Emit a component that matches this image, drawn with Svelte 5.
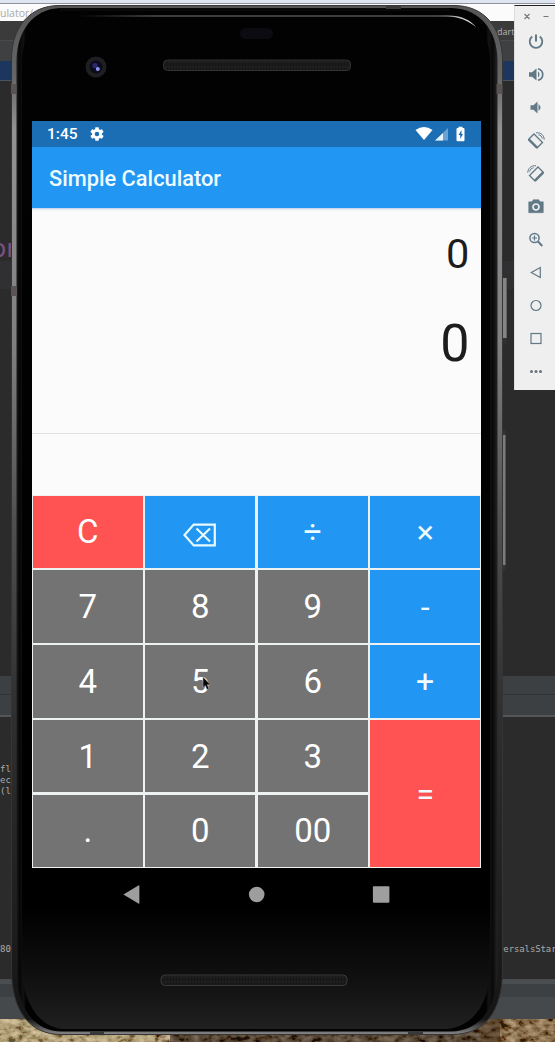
<script>
  const keys = [
    { t: 'C', c: 'red' }, { t: 'back', c: 'blue' }, { t: '÷', c: 'blue op' }, { t: '×', c: 'blue op' },
    { t: '7' }, { t: '8' }, { t: '9' }, { t: '-', c: 'blue op' },
    { t: '4' }, { t: '5' }, { t: '6' }, { t: '+', c: 'blue op' },
    { t: '1' }, { t: '2' }, { t: '3' }, { t: '=', c: 'red op tall' },
    { t: '.' }, { t: '0' }, { t: '00' }
  ];
  const tools = ['power', 'volup', 'voldown', 'rotl', 'rotr', 'camera', 'zoom', 'back', 'home', 'square', 'more'];
</script>

<div class="desktop">
  <div class="ide">
    <div class="topline"></div>
    <div class="address"><span>ulator/c</span></div>
    <div class="tabs"><span>dart</span></div>
    <div class="subtabs"></div>
    <div class="crumb"></div>
    <div class="editor"><span>or</span></div>
    <div class="bar first"></div>
    <div class="bar second"></div>
    <div class="console">
      <pre class="log">fl
ec
(l</pre>
      <div class="last"><span>80</span><span class="right">versalsStar</span></div>
    </div>
    <div class="status"></div>
    <svg class="rocks" width="555" height="23" viewBox="0 0 555 23">
      <filter id="grain" x="0" y="0" width="100%" height="100%">
        <feTurbulence type="fractalNoise" baseFrequency="0.11 0.17" numOctaves="5" seed="8" />
        <feColorMatrix values="1.5 .3 0 0 -.55  1.3 .25 0 0 -.52  .95 .2 0 0 -.43  0 0 0 0 1" />
      </filter>
      <rect width="555" height="23" fill="#66543c" />
      <rect width="555" height="23" filter="url(#grain)" opacity=".85" />
      <rect width="155" height="23" fill="#d8cc98" opacity=".38" />
      <rect x="170" width="330" height="23" fill="#1c0f0c" opacity=".5" />
      <rect x="480" width="75" height="23" fill="#6b4520" opacity=".3" />
    </svg>
  </div>

  <div class="phone">
    <svg class="body" width="508" height="1036" viewBox="0 0 508 1036">
      <defs>
        <linearGradient id="rim" x1="0" y1="0" x2="0" y2="1">
          <stop offset="0" stop-color="#555" /><stop offset=".07" stop-color="#666" /><stop offset=".12" stop-color="#929292" />
          <stop offset=".33" stop-color="#808080" /><stop offset=".5" stop-color="#505050" /><stop offset=".68" stop-color="#303030" /><stop offset=".985" stop-color="#151515" /><stop offset="1" stop-color="#888" />
        </linearGradient>
        <linearGradient id="face" x1="0" y1="0" x2="0" y2="1">
          <stop offset="0" stop-color="#020202" /><stop offset=".88" stop-color="#000" /><stop offset=".95" stop-color="#101010" /><stop offset="1" stop-color="#202020" />
        </linearGradient>
        <linearGradient id="edge" x1="0" y1="0" x2="1" y2="0">
          <stop offset="0" stop-color="#1c1c1c" /><stop offset=".006" stop-color="#060606" /><stop offset=".014" stop-color="#121212" /><stop offset=".02" stop-color="#020202" />
          <stop offset=".976" stop-color="#020202" /><stop offset=".982" stop-color="#141414" /><stop offset=".99" stop-color="#090909" /><stop offset="1" stop-color="#242424" />
        </linearGradient>
        <linearGradient id="shine" x1="0" y1="0" x2="1" y2="0">
          <stop offset="0" stop-color="#777" stop-opacity="0" /><stop offset=".2" stop-color="#777" /><stop offset=".9" stop-color="#777" /><stop offset="1" stop-color="#eee" />
        </linearGradient>
        <pattern id="mesh" width="6" height="5" patternUnits="userSpaceOnUse">
          <rect width="6" height="5" fill="#151515" /><path d="M0 2H6M1 0V5M4 0V5" stroke="#292929" stroke-width=".6" />
        </pattern>
      </defs>
      <rect x="501" y="273" width="6" height="72" rx="2" fill="#303030" /><rect x="503" y="278" width="3.6" height="60" fill="#858585" />
      <rect x="500" y="430" width="5.5" height="141" rx="2" fill="#343434" /><rect x="502.5" y="435" width="3" height="130" fill="#7c7c7c" />
      <path d="M59 5.500H454C484 5.500 502 27 502.500 60V972C502 1010 486 1034.500 452 1034.500H61C29 1034.500 12 1010 11.500 972V58C12 27 30 5.500 59 5.500Z" fill="url(#rim)" stroke="#353535" />
      <path d="M60 8H452C480 9 497 30 497.500 60V972C497 1006 481 1031 451 1031.500H62C33 1031.500 17 1006 16.500 972V60C17 31 33 9 60 8Z" fill="url(#edge)" />
      <path d="M63 13H449C476 15 489 32 490 60V970C489 1002 475 1025 448 1029H62C37 1026 23 1000 22 970V60C23 32 37 15 63 13Z" fill="url(#face)" />
      <path d="M78 15.500H448C462 15.500 470 20 476 27C467 20 459 17 447 16.500H78Z" fill="url(#shine)" />
      <path d="M60 9.500H450" stroke="#090909" stroke-width="3" />
      <path d="M11 84H16.500V94H11ZM11 286H17V296H11ZM496.500 84H502.500V94H496.500Z" fill="#595353" />
      <path d="M386 5.500H401V9H386ZM408 1031.500H423V1034H408ZM90 1031.500H104V1034H90Z" fill="#393939" />
      <rect x="240" y="28" width="33" height="11" rx="5.500" fill="#0c0b12" />
      <rect x="163.500" y="60" width="187" height="10.500" rx="4" fill="url(#mesh)" stroke="#333" />
      <rect x="161" y="975" width="186" height="10.500" rx="4" fill="url(#mesh)" stroke="#383838" />
      <circle cx="96" cy="67" r="10.500" fill="#1f1e21" /><circle cx="96" cy="67" r="6.500" fill="#0d0c1c" />
      <circle cx="95" cy="65.500" r="2.600" fill="#28286b" /><circle cx="97.800" cy="69" r="2" fill="#8e96ee" />
    </svg>

    <div class="screen">
      <div class="statusbar">
        <span>1:45</span>
        <svg class="gear" width="16" height="16" viewBox="0 0 24 24"><path fill="#fff" fill-rule="evenodd" d="M19.4 13a7.800 7.800 0 0 0 0-2l2.200-1.700a.5.5 0 0 0 .1-.7l-2-3.400a.5.5 0 0 0-.6-.2l-2.500 1a7.500 7.500 0 0 0-1.700-1L14.500 2.400A.5.5 0 0 0 14 2h-4a.5.5 0 0 0-.5.4L9.100 5a7.500 7.500 0 0 0-1.700 1l-2.500-1a.5.5 0 0 0-.6.2l-2 3.400a.5.5 0 0 0 .1.7L4.600 11a7.800 7.800 0 0 0 0 2l-2.200 1.700a.5.5 0 0 0-.1.7l2 3.400c.1.200.4.300.6.200l2.500-1a7.500 7.500 0 0 0 1.700 1l.4 2.600c0 .2.200.4.5.4h4c.3 0 .5-.2.500-.4l.4-2.600a7.500 7.500 0 0 0 1.700-1l2.500 1c.2.100.5 0 .6-.2l2-3.400a.5.500 0 0 0-.1-.7L19.400 13ZM12 15.400a3.400 3.400 0 1 1 0-6.800 3.400 3.400 0 0 1 0 6.800Z" /></svg>
        <svg class="signals" width="52" height="18" viewBox="0 0 52 18">
          <path d="M.5 5Q9 -1 17.500 5L9 15Z" fill="#fff" />
          <path d="M33 3V15.500H20Z" fill="#6aa2d3" /><path d="M28 8V15.500H20Z" fill="#e6f4ff" />
          <path d="M43.500 3H42.500Q41.500 3 41.500 4V15Q41.500 16.200 42.500 16.200H48.500Q49.500 16.200 49.500 15V4Q49.500 3 48.500 3H47.500V1.800H43.500Z" fill="#fff" /><path d="M46.500 5L43.500 10H45.200V14L48 9H46.500Z" fill="#1b6cb0" />
        </svg>
      </div>
      <div class="appbar">Simple Calculator</div>
      <div class="readout">
        <div class="expression">0</div>
        <div class="result">0</div>
      </div>
      <div class="gap"></div>
      <div class="keys">
        {#each keys as k}
          <div class="key {k.c ?? ''}">
            {#if k.t === 'back'}
              <svg width="34" height="25" viewBox="0 0 34 25" fill="none" stroke="#e8faff" stroke-width="2.200"><path d="M10.700 1.600H31.800V22.400H10.700L1.500 12Z" /><path d="M13.500 5.500L27 18.500M27 5.500L13.500 18.500" /></svg>
            {:else}{k.t}{/if}
          </div>
        {/each}
      </div>
      <div class="nav">
        <svg width="449" height="52" viewBox="0 0 449 52" fill="#9e9e9e"><path d="M91.400 26.500L106.400 17.500Q107.400 17 107.400 18V35Q107.400 36 106.400 35.500Z" /><circle cx="224.700" cy="26.500" r="7.800" /><rect x="340.900" y="18.300" width="16.500" height="16.500" rx="1" /></svg>
      </div>
    </div>
  </div>

  <svg class="cursor" width="10" height="16" viewBox="0 0 10 16"><path d="M1 1V11.500L3.300 9.500L5 13.500L7 12.600L5.300 8.800H8.500Z" fill="#050505" stroke="#aaa" stroke-width=".6" /></svg>

  <div class="tools">
    <svg class="winbtns" width="41" height="19" viewBox="0 0 41 19" stroke="#777" stroke-width="1.100"><path d="M10.500 8L15.500 13M15.500 8L10.500 13M29.500 10.500H34.500" /></svg>
    {#each tools as n}
      <svg class="tool" width="22" height="33" viewBox="-11 -16.500 22 33" fill="none" stroke="#617885" stroke-width="1.500">
        {#if n === 'power'}
          <path d="M0 -7V0" stroke-width="2" /><path d="M-3.800 -5A6.300 6.300 0 1 0 3.800 -5" stroke-width="1.800" />
        {:else if n === 'volup'}
          <path d="M-7 -2.300H-4L.5 -6V6L-4 2.300H-7Z" fill="#617885" stroke="none" /><path d="M2 -3.200Q5 0 2 3.200Z" fill="#617885" stroke="none" /><path d="M2 -5.800C8.300 -4 8.300 4 2 5.800" stroke-width="1.700" />
        {:else if n === 'voldown'}
          <path d="M-5.500 -2.300H-2.500L1.500 -6V6L-2.500 2.300H-5.500Z" fill="#617885" stroke="none" /><path d="M2.500 -3.500Q6.500 0 2.500 3.500Z" fill="#617885" stroke="none" />
        {:else if n === 'rotl' || n === 'rotr'}
          <g transform={n === 'rotr' ? 'scale(-1 1)' : ''}>
            <path d="M-7.300 -1.200L-2 -6.500L6.500 2L1.200 7.300Z" stroke-width="1.300" /><path d="M-7.300 -1.200L1.200 7.300" stroke-width="2.400" /><path d="M0 -7.700C5 -8.300 8.200 -5 8.200 -.8M2.500 -5.700C4.500 -5.500 6 -4 6.300 -1.900" stroke-width="1" />
          </g>
        {:else if n === 'camera'}
          <path d="M-7.300 -4.700H-4L-2.800 -6.800H2.800L4 -4.700H7.300V6.200H-7.300Z" fill="#617885" stroke="#617885" stroke-width=".5" stroke-linejoin="round" /><circle cx="0" cy=".5" r="3" stroke="#eceff1" stroke-width="1.700" />
        {:else if n === 'zoom'}
          <circle cx="-1.500" cy="-1.500" r="4.600" /><path d="M2 2L6.300 6.500" stroke-width="2" /><path d="M-4 -1.500H1M-1.500 -4V1" stroke-width="1.200" />
        {:else if n === 'back'}
          <path d="M4.300 -5V5L-4.700 0Z" stroke-width="1.200" />
        {:else if n === 'home'}
          <circle cx="0" cy="0" r="5" stroke-width="1.200" />
        {:else if n === 'square'}
          <rect x="-5" y="-5" width="10" height="10" stroke-width="1.200" />
        {:else}
          <g fill="#68737a" stroke="none"><circle cx="-4.500" cy="0" r="1.500" /><circle cx="0" cy="0" r="1.500" /><circle cx="4.500" cy="0" r="1.500" /></g>
        {/if}
      </svg>
    {/each}
  </div>
</div>

<style>
  .desktop { position: relative; width: 555px; height: 1042px; overflow: hidden; background: #2b2b2b; font-family: Roboto, sans-serif; }
  .ide { display: flex; flex-direction: column; height: 1042px; }
  .topline { height: 3px; background: #dfe4f1; border-bottom: 1px solid #8d929c; }
  .address { height: 17px; background: #fbfbfb; color: #aaa; font: 10.500px/18px "Open Sans", sans-serif; }
  .tabs { height: 20px; box-sizing: border-box; background: #3b3b3c; border-bottom: 1px solid #4b4b4b; color: #b5b5b5; font: 9px/21px "Open Sans", sans-serif; padding-left: 497px; }
  .subtabs { height: 20px; background: #3f4041; }
  .crumb { height: 19px; background: #1d365e; border-bottom: 1px solid #4a5361; }
  .editor { height: 595px; color: #79517e; font: 25px/336px "DejaVu Sans", sans-serif; background: linear-gradient(#2b2b2b 180px, #303032 180px, #303032 208px, #2b2b2b 208px); }
  .editor span { margin-left: -9px; }
  .bar { height: 18px; background: #3d4043; border-bottom: 1px solid #303235; }
  .bar.second { height: 20px; border-bottom: 2px solid #555657; }
  .console { height: 262px; box-sizing: border-box; display: flex; flex-direction: column; justify-content: space-between; padding: 47px 0 23px; color: #aaa; font: 9px/11px "DejaVu Sans Mono", monospace; }
  .log { margin: 0; font: inherit; }
  .last { display: flex; justify-content: space-between; line-height: 14px; }
  .right { width: 57px; white-space: nowrap; letter-spacing: -.1px; }
  .status { height: 40px; background: linear-gradient(#4b4e50 0 5px, #3d4042 5px 18px, #45494c 18px); }
  .rocks { display: block; }
  .phone { position: absolute; left: 0; top: 0; width: 508px; height: 1036px; }
  .body { position: absolute; left: 0; top: 0; }
  .screen { position: relative; margin: 121px 0 0 31.600px; width: 449.800px; }
  .statusbar { height: 26px; box-sizing: border-box; background: #1b6eb4; color: #fff; display: flex; align-items: center; padding: 0 14px 0 15.400px; font-size: 15.500px; font-weight: 500; }
  .gear { margin-left: 11px; }
  .signals { margin-left: auto; }
  .appbar { height: 61px; background: #2196f3; color: #eefcff; font-size: 21.800px; font-weight: 500; line-height: 63px; padding-left: 17.400px; }
  .readout { box-sizing: border-box; height: 226px; background: linear-gradient(#b9cfe9, #f2f4f8 2px, #fbfbfb 4px); border-bottom: 1px solid #e1e1e1; padding: 21px 12px 0 0; color: #1d1d1d; text-align: right; }
  .expression { font-size: 41.500px; line-height: 49px; }
  .result { font-size: 52px; line-height: 62px; margin-top: 35px; }
  .gap { height: 60.500px; background: #fbfbfb; }
  .keys { display: grid; grid-template-columns: repeat(4, 1fr); grid-template-rows: repeat(5, 74.750px); background: #eef1f2; }
  .key { margin: 1.200px; background: #737373; color: #fff; font-size: 33px; display: flex; align-items: center; justify-content: center; }
  .key svg { margin-top: 7px; }
  .blue { background: #2196f3; }
  .red { background: #ff5252; }
  .op { font-weight: 400; font-size: 32px; color: #eefcff; }
  .tall { grid-row: span 2; }
  .nav { height: 52px; }
  .nav svg { display: block; }
  .cursor { position: absolute; left: 202px; top: 676px; }
  .tools { position: absolute; left: 514px; top: 5px; width: 41px; height: 385px; box-sizing: border-box; border-top: 1px solid #222; border-left: 1px solid #ddd; background: #efeff0; display: flex; flex-direction: column; align-items: center; }
  .winbtns { flex: none; margin: 0 0 -.5px -1px; }
  .tool { flex: none; margin-left: 2px; }
</style>
